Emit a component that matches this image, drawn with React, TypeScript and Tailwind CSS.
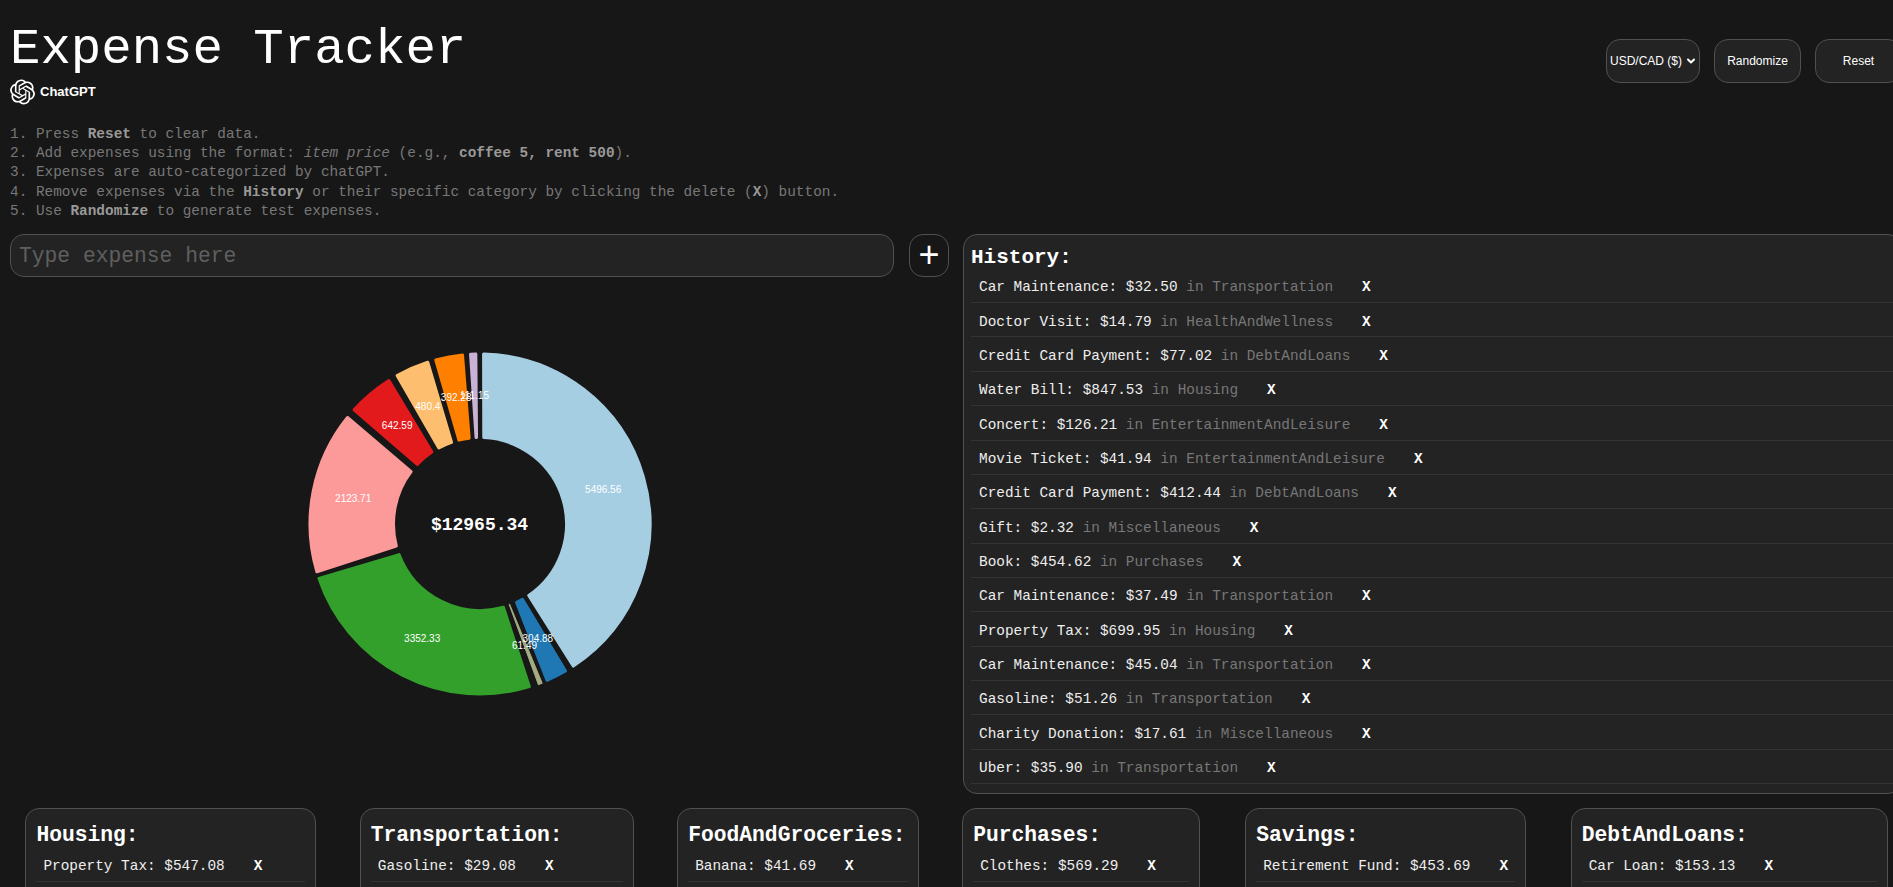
import React from "react";
import { SiOpenai } from "react-icons/si";
import { ChevronDown } from "lucide-react";

const mono = "font-['Liberation_Mono',monospace]";

const history = [
  ["Car Maintenance: $32.50", "Transportation"],
  ["Doctor Visit: $14.79", "HealthAndWellness"],
  ["Credit Card Payment: $77.02", "DebtAndLoans"],
  ["Water Bill: $847.53", "Housing"],
  ["Concert: $126.21", "EntertainmentAndLeisure"],
  ["Movie Ticket: $41.94", "EntertainmentAndLeisure"],
  ["Credit Card Payment: $412.44", "DebtAndLoans"],
  ["Gift: $2.32", "Miscellaneous"],
  ["Book: $454.62", "Purchases"],
  ["Car Maintenance: $37.49", "Transportation"],
  ["Property Tax: $699.95", "Housing"],
  ["Car Maintenance: $45.04", "Transportation"],
  ["Gasoline: $51.26", "Transportation"],
  ["Charity Donation: $17.61", "Miscellaneous"],
  ["Uber: $35.90", "Transportation"],
];

const categories = [
  { name: "Housing", item: "Property Tax: $547.08", width: "w-[291px]" },
  { name: "Transportation", item: "Gasoline: $29.08", width: "ml-[43.4px] w-[274px]" },
  { name: "FoodAndGroceries", item: "Banana: $41.69", width: "ml-[43.4px] w-[242px]" },
  { name: "Purchases", item: "Clothes: $569.29", width: "ml-[43px] w-[238px]" },
  { name: "Savings", item: "Retirement Fund: $453.69", width: "ml-[45px] w-[281px]" },
  { name: "DebtAndLoans", item: "Car Loan: $153.13", width: "ml-[44.5px] w-[317px]" },
];

// corner angles read off the reference: outer start/end, inner start/end
const segments = [
  { color: "#a6cee3", a: [0.7, 147.2, 1.5, 146.7] },
  { color: "#1f78b4", a: [149.3, 157.3, 149.6, 156] },
  { color: "#a5ab82", a: [158.5, 160.2, 159.4, 160.4] },
  { color: "#33a02c", a: [162.6, 251.8, 163.3, 250.3] },
  { color: "#fb9a99", a: [253.2, 309.3, 254.3, 308.2] },
  { color: "#e31a1c", a: [311.7, 328.1, 312.5, 327.2] },
  { color: "#fdbf6f", a: [330.3, 342.6, 330.6, 341.8] },
  { color: "#ff7f00", a: [344.4, 354.6, 344.9, 353.8] },
  { color: "#cab2d6", a: [356.3, 359.1, 356.4, 358.7] },
];

const labels = [
  ["5496.56", 938, 449],
  ["304.88", 742, 895],
  ["61.49", 702, 915],
  ["3352.33", 395, 895],
  ["2123.71", 188, 476],
  ["642.59", 320, 257],
  ["480.4", 412, 200],
  ["392.28", 497, 172],
  ["111.15", 552, 167],
] as const;

const C = 172;
const pt = (r: number, deg: number) => {
  const t = (deg * Math.PI) / 180;
  return `${(C + r * Math.sin(t)).toFixed(2)} ${(C - r * Math.cos(t)).toFixed(2)}`;
};

function sectorPath(a: number[], inset: number) {
  const rO = 171.5 - inset;
  const rI = 85 + inset;
  const dO = ((inset / rO) * 180) / Math.PI;
  const dI = ((inset / rI) * 180) / Math.PI;
  const large = a[1] - a[0] > 180 ? 1 : 0;
  return `M${pt(rO, a[0] + dO)} A${rO} ${rO} 0 ${large} 1 ${pt(rO, a[1] - dO)} L${pt(rI, a[3] - dI)} A${rI} ${rI} 0 ${large} 0 ${pt(rI, a[2] + dI)} Z`;
}

function Donut() {
  return (
    <svg width="344" height="344" viewBox="0 0 344 344">
      {segments.map((s, i) => {
        const inset = s.a[1] - s.a[0] < 2 ? 0.5 : 1.5;
        return (
          <path
            key={i}
            d={sectorPath(s.a, inset)}
            fill={s.color}
            stroke={s.color}
            strokeWidth={inset * 2}
            strokeLinejoin="round"
          />
        );
      })}
      {labels.map(([text, x, y]) => (
        <text
          key={text}
          x={x / 3 - 17.5}
          y={y / 3 - 12}
          fill="#fff"
          fontSize="10"
          textAnchor="middle"
          dominantBaseline="central"
          fontFamily="'Liberation Sans', sans-serif"
        >
          {text}
        </text>
      ))}
      <text
        x={C - 0.5}
        y={C + 1}
        fill="#fff"
        fontSize="18"
        fontWeight="700"
        textAnchor="middle"
        dominantBaseline="central"
        fontFamily="'Liberation Mono', monospace"
      >
        $12965.34
      </text>
    </svg>
  );
}

function Row({ text, category, inset }: { text: string; category?: string; inset: string }) {
  return (
    <li
      className={`flex h-[34.36px] items-center border-b border-[#333333] pt-[5px] text-[14.4px] whitespace-pre text-[#eeeeee] ${inset}`}
    >
      <span>{text}</span>
      {category && <span className="text-[#777777]"> in {category}</span>}
      <span className="ml-[29px] font-bold text-white">X</span>
    </li>
  );
}

export default function App() {
  return (
    <div className={`h-[887px] w-[1893px] overflow-hidden bg-[#171717] ${mono}`}>
      <div className="w-[1902px] pl-[10px]">
        <header className="flex items-start justify-between">
          <div>
            <h1 className="h-[79px] pt-[20px] text-[50.7px] leading-[60px] font-normal text-white">
              Expense Tracker
            </h1>
            <div className="flex h-[26px] items-center gap-[5px] font-['Liberation_Sans',sans-serif] text-[13px] font-bold text-white">
              <SiOpenai className="h-[26px] w-[25px]" />
              ChatGPT
            </div>
          </div>
          <div className="mt-[39px] flex gap-[14px] font-['Liberation_Sans',sans-serif] text-[12px] text-white">
            <div className="relative">
              <select className="h-[44px] w-[94px] appearance-none rounded-[14px] border border-[#505050] bg-[#232323] pl-[3px] text-[12px]">
                <option>USD/CAD ($)</option>
              </select>
              <ChevronDown
                className="pointer-events-none absolute top-[16px] right-[3px]"
                size={12}
                strokeWidth={4}
              />
            </div>
            <button className="h-[44px] w-[87px] rounded-[14px] border border-[#505050] bg-[#232323]">
              Randomize
            </button>
            <button className="h-[44px] w-[87px] rounded-[14px] border border-[#505050] bg-[#232323]">
              Reset
            </button>
          </div>
        </header>

        <div className="mt-[19.5px] text-[14.4px] leading-[19.45px] text-[#777777]">
          <p>
            1. Press <b className="text-[#999999]">Reset</b> to clear data.
          </p>
          <p>
            2. Add expenses using the format: <i>item price</i> (e.g.,{" "}
            <b className="text-[#999999]">coffee 5, rent 500</b>).
          </p>
          <p>3. Expenses are auto-categorized by chatGPT.</p>
          <p>
            4. Remove expenses via the <b className="text-[#999999]">History</b> or their specific
            category by clicking the delete (<b className="text-[#999999]">X</b>) button.
          </p>
          <p>
            5. Use <b className="text-[#999999]">Randomize</b> to generate test expenses.
          </p>
        </div>

        <main className="mt-[12px] flex">
          <section className="w-[939px]">
            <div className="flex gap-[15px]">
              <input
                placeholder="Type expense here"
                className="h-[43px] flex-1 rounded-[14px] border border-[#505050] bg-[#232323] px-[8px] pt-[2px] text-[21.3px] text-white placeholder:text-[#5f5f5f]"
              />
              <button className="flex h-[43px] w-[40px] items-center justify-center rounded-[14px] border border-[#505050] bg-[#171717] font-['Liberation_Sans',sans-serif] text-[36px] leading-none font-normal text-white">
                +
              </button>
            </div>
            <div className="mt-[75px] flex justify-center">
              <Donut />
            </div>
          </section>

          <section className="ml-[14px] h-[560px] flex-1 rounded-[14px] border border-[#505050] bg-[#232323] px-[7px] pt-[8px]">
            <h2 className="h-[26px] pt-[2px] text-[21px] leading-[26px] font-bold text-white">
              History:
            </h2>
            <ul>
              {history.map(([text, category], i) => (
                <Row key={i} text={text} category={category} inset="pl-[8px]" />
              ))}
            </ul>
          </section>
        </main>

        <div className="mt-[14.5px] flex pl-[15.4px]">
          {categories.map((c) => (
            <section
              key={c.name}
              className={`h-[120px] shrink-0 rounded-[14px] border border-[#505050] bg-[#232323] px-[10px] pt-[11px] ${c.width}`}
            >
              <h3 className="h-[27px] pt-[2px] text-[21.3px] leading-[27px] font-bold text-white">
                {c.name}:
              </h3>
              <ul>
                <Row text={c.item} inset="pl-[7px]" />
              </ul>
            </section>
          ))}
        </div>
      </div>
    </div>
  );
}
